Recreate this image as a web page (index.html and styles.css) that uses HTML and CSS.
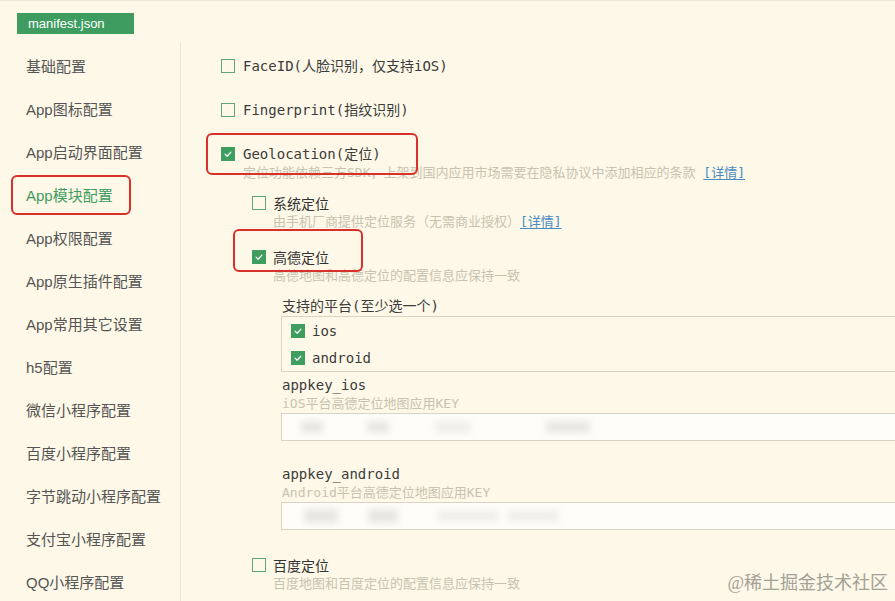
FILE: index.html
```html
<!DOCTYPE html>
<html lang="zh-CN">
<head>
<meta charset="utf-8">
<title>manifest.json</title>
<link rel="stylesheet" href="styles.css">
</head>
<body>
<div class="app">
  <div class="tabbar"><span class="tab">manifest.json</span></div>
  <div class="body">
    <nav class="sidebar">
      <div class="nav-item">基础配置</div>
      <div class="nav-item">App图标配置</div>
      <div class="nav-item">App启动界面配置</div>
      <div class="nav-item active">App模块配置<span class="hl hl-nav"></span></div>
      <div class="nav-item">App权限配置</div>
      <div class="nav-item">App原生插件配置</div>
      <div class="nav-item">App常用其它设置</div>
      <div class="nav-item">h5配置</div>
      <div class="nav-item">微信小程序配置</div>
      <div class="nav-item">百度小程序配置</div>
      <div class="nav-item">字节跳动小程序配置</div>
      <div class="nav-item">支付宝小程序配置</div>
      <div class="nav-item">QQ小程序配置</div>
    </nav>
    <main class="main">
      <div class="opt opt-top"><span class="cb"></span><span class="label">FaceID(人脸识别，仅支持iOS)</span></div>
      <div class="opt opt-top"><span class="cb"></span><span class="label">Fingerprint(指纹识别)</span></div>
      <div class="opt"><span class="cb on"><svg viewBox="0 0 14 14"><polyline points="3.6,7.2 6,9.6 10.4,4.8"/></svg></span><span class="label">Geolocation(定位)</span><span class="hl hl-geo"></span></div>
      <div class="desc desc-top">定位功能依赖三方SDK，上架到国内应用市场需要在隐私协议中添加相应的条款 <a class="link">[详情]</a></div>

      <div class="sub">
        <div class="opt opt-sub opt-sys"><span class="cb"></span><span class="label cjk">系统定位</span></div>
        <div class="desc desc-sub">由手机厂商提供定位服务（无需商业授权）<a class="link">[详情]</a></div>

        <div class="opt opt-sub opt-gd"><span class="cb on"><svg viewBox="0 0 14 14"><polyline points="3.6,7.2 6,9.6 10.4,4.8"/></svg></span><span class="label cjk">高德定位</span><span class="hl hl-gd"></span></div>
        <div class="desc desc-sub">高德地图和高德定位的配置信息应保持一致</div>

        <section class="fields">
          <div class="field-label first">支持的平台(至少选一个)</div>
          <div class="box">
            <div class="box-row"><span class="cb on"><svg viewBox="0 0 14 14"><polyline points="3.6,7.2 6,9.6 10.4,4.8"/></svg></span><span class="label">ios</span></div>
            <div class="box-row"><span class="cb on"><svg viewBox="0 0 14 14"><polyline points="3.6,7.2 6,9.6 10.4,4.8"/></svg></span><span class="label">android</span></div>
          </div>
          <div class="field-label after-box">appkey_ios</div>
          <div class="field-desc">iOS平台高德定位地图应用KEY</div>
          <div class="input input-ios">
            <span class="smear s1"></span><span class="smear s2"></span><span class="smear s3 faint"></span><span class="smear s4"></span>
          </div>
          <div class="field-label after-input">appkey_android</div>
          <div class="field-desc">Android平台高德定位地图应用KEY</div>
          <div class="input input-and">
            <span class="smear a1"></span><span class="smear a2"></span><span class="smear a3 faint"></span><span class="smear a4 faint"></span>
          </div>
        </section>

        <div class="opt opt-sub opt-bd"><span class="cb"></span><span class="label cjk">百度定位</span></div>
        <div class="desc desc-sub">百度地图和百度定位的配置信息应保持一致</div>
      </div>
    </main>
  </div>
  <div class="watermark">@稀土掘金技术社区</div>
</div>
</body>
</html>
```

FILE: styles.css
```css
* { box-sizing: border-box; }

html, body {
  margin: 0;
  padding: 0;
}

body {
  width: 895px;
  height: 601px;
  overflow: hidden;
  background: #fdf8e7;
}

.app {
  position: relative;
  width: 895px;
  height: 601px;
  border-top: 1px solid #ebe5d2;
  background: #fdf8e7;
  overflow: hidden;
}

.tabbar {
  height: 42px;
  padding: 12px 0 0 17px;
}

.tab {
  display: inline-block;
  width: 117px;
  height: 21px;
  line-height: 21px;
  padding-left: 11px;
  background: #3e9c60;
  color: #ffffff;
  font-family: "Liberation Sans", "Noto Sans CJK SC", sans-serif;
  font-size: 13px;
}

.body {
  display: flex;
  height: 558px;
}

.sidebar {
  width: 181px;
  flex: none;
  border-right: 1px solid #ece6d3;
  padding-top: 2px;
}

.nav-item {
  position: relative;
  height: 43px;
  line-height: 43px;
  padding-left: 26px;
  font-family: "Liberation Sans", "Noto Sans CJK SC", sans-serif;
  font-size: 15px;
  color: #555555;
}

.nav-item.active {
  color: #3f9c60;
}

.hl {
  position: absolute;
  border: 2px solid #d8302a;
  border-radius: 6px;
  pointer-events: none;
}

.hl-nav {
  left: 11px;
  top: 1px;
  width: 120px;
  height: 40px;
}

.main {
  flex: 1;
  padding: 13px 0 0 40px;
  min-width: 0;
}

.opt {
  position: relative;
  display: flex;
  align-items: center;
  gap: 8px;
  height: 20px;
}

.opt-top { margin-bottom: 24px; }

.opt-sub { gap: 7px; }
.opt-sys { margin-top: 11px; }
.opt-gd { margin-top: 16px; }
.opt-bd { margin-top: 25px; }

.hl-geo {
  left: -15px;
  top: -11px;
  width: 212px;
  height: 42px;
}

.hl-gd {
  left: -19px;
  top: -18px;
  width: 130px;
  height: 43px;
}

.cb {
  flex: none;
  width: 14px;
  height: 14px;
  border: 1px solid #5ea676;
  background: transparent;
  display: inline-flex;
}

.cb.on {
  background: #3f9e5f;
  border-color: #3f9e5f;
}

.cb svg {
  width: 12px;
  height: 12px;
  fill: none;
  stroke: #ffffff;
  stroke-width: 1.4;
  stroke-linecap: round;
  stroke-linejoin: round;
}

.label {
  font-family: "DejaVu Sans Mono", "Noto Sans CJK SC", monospace;
  font-size: 14px;
  line-height: 20px;
  color: #3c3c3c;
  white-space: nowrap;
}

.label.cjk {
  font-family: "Noto Sans CJK SC", sans-serif;
  color: #333333;
}

.desc {
  font-family: "DejaVu Sans Mono", "Noto Sans CJK SC", monospace;
  font-size: 13px;
  line-height: 18px;
  color: #c8c3b1;
  white-space: nowrap;
}

.desc-top { padding-left: 22px; }
.desc-sub { padding-left: 21px; }

.link {
  color: #4a8bc3;
  text-decoration: underline;
  text-underline-offset: 2px;
}

.sub {
  margin-left: 31px;
}

.fields {
  margin-left: 29px;
  margin-right: -40px;
}

.field-label {
  font-family: "DejaVu Sans Mono", "Noto Sans CJK SC", monospace;
  font-size: 14px;
  line-height: 20px;
  color: #3c3c3c;
  padding-left: 1px;
  white-space: nowrap;
}

.field-label.first { margin-top: 11px; }
.field-label.after-box { margin-top: 3px; }
.field-label.after-input { margin-top: 23px; }

.field-desc {
  font-family: "DejaVu Sans Mono", "Noto Sans CJK SC", monospace;
  font-size: 13px;
  line-height: 18px;
  color: #c8c3b1;
  padding-left: 1px;
  white-space: nowrap;
}

.box {
  border: 1px solid #d9d4c1;
  padding-left: 9px;
}

.box-row {
  display: flex;
  align-items: center;
  gap: 7px;
  height: 27px;
}

.input {
  height: 28px;
  border: 1px solid #d9d4c1;
  background: #fefdf8;
  display: flex;
  align-items: center;
  overflow: hidden;
}

.smear {
  display: block;
  height: 12px;
  background: #e9e7e2;
  filter: blur(3px);
  flex: none;
}

.smear.faint { background: #f1efea; }

.s1 { width: 22px; margin-left: 19px; }
.s2 { width: 22px; margin-left: 44px; }
.s3 { width: 36px; margin-left: 46px; }
.s4 { width: 44px; margin-left: 75px; }

.a1 { width: 34px; margin-left: 22px; height: 14px; }
.a2 { width: 30px; margin-left: 30px; height: 14px; }
.a3 { width: 60px; margin-left: 40px; }
.a4 { width: 50px; margin-left: 10px; }

.watermark {
  position: absolute;
  right: 7px;
  bottom: 6px;
  font-family: "Liberation Serif", "Noto Sans CJK SC", serif;
  font-size: 18px;
  line-height: 24px;
  color: #a3a096;
  white-space: nowrap;
}
```
